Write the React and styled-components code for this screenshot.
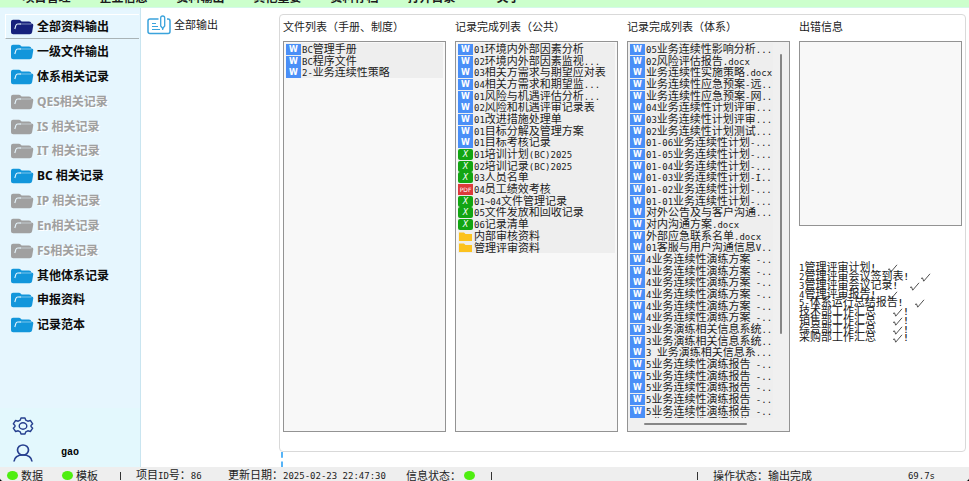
import styled, { createGlobalStyle, css } from "styled-components";
import { useState } from "react";

const GlobalStyle = createGlobalStyle`
  * {
    box-sizing: border-box;
  }
  body {
    margin: 0;
    background: #000;
  }
  button {
    border: 0;
    padding: 0;
    background: none;
    font: inherit;
    color: inherit;
    cursor: pointer;
  }
  ul {
    margin: 0;
    padding: 0;
    list-style: none;
  }
`;

const Page = styled.div`
  height: 100vh;
  display: flex;
  flex-direction: column;
  overflow: hidden;
  background: #fff;
  border-radius: 0 0 4px 4px;
  color: #1c1c1c;
  font-family: "Liberation Sans", "Noto Sans CJK SC", sans-serif;
  font-size: 11px;
  line-height: 12px;
`;

const MenuBar = styled.nav`
  height: 8px;
  flex: none;
  display: flex;
  align-items: flex-end;
  padding: 0 8px 2px;
  overflow: hidden;
  background: #ccffcc;
  border-bottom: 1px solid #d4f8ea;
`;
const MenuItem = styled.button`
  width: 77px;
  font-size: 12px;
  font-weight: 700;
  line-height: 14px;
`;

const Body = styled.div`
  flex: 1;
  min-height: 0;
  display: flex;
`;

// sidebar
const Sidebar = styled.aside`
  width: 141px;
  flex: none;
  display: flex;
  flex-direction: column;
  background: #e6f6fe;
  border-right: 1px solid #c9e5f0;
`;
const SideList = styled.ul`
  flex: 1;
  padding: 6px 1px 0 5px;
`;
const SideItem = styled.li`
  height: 25px;
  &:nth-child(6n) {
    height: 24px;
  }
`;
const SideButton = styled.button`
  width: 100%;
  height: 100%;
  display: flex;
  align-items: center;
  gap: 3px;
  padding-left: 5px;
  font-family: "Noto Sans", "Noto Sans CJK SC", sans-serif;
  font-size: 12px;
  font-weight: 700;
  line-height: 16px;
  white-space: nowrap;
  color: #0c0c0c;
  ${(props) =>
    props.$active &&
    css`
      border-top: 1px solid #fff;
      border-left: 1px solid #fff;
      border-bottom: 1px solid #a9b3b6;
      padding-left: 4px;
    `}
  &:disabled {
    color: #a0a0a0;
    text-shadow: 1px 1px 0 #fff;
    cursor: default;
  }
`;
const SideFooter = styled.div`
  display: flex;
  flex-direction: column;
  gap: 4px;
  padding: 8px 0 3px 12px;
  background: #e3f8fd;
  color: #27408f;
`;
const FooterRow = styled.div`
  height: 22px;
  display: flex;
  align-items: center;
  gap: 27px;
`;
const UserName = styled.span`
  color: #000;
  font-family: "Liberation Mono", monospace;
  font-size: 10px;
  font-weight: 700;
`;

// workspace
const Tree = styled.div`
  width: 138px;
  flex: none;
  padding: 7px 6px;
`;
const TreeItem = styled.button`
  display: flex;
  align-items: center;
  gap: 3px;
  white-space: nowrap;
`;
const Workspace = styled.main`
  flex: 1;
  min-width: 0;
  display: flex;
  flex-direction: column;
  padding: 6px 3px 0 0;
`;
const Group = styled.section`
  flex: 1;
  min-height: 0;
  display: grid;
  grid-template-columns: repeat(4, minmax(0, 1fr));
  gap: 9px;
  padding: 4px 3px 19px;
  border: 1px solid #d9d9d9;
  border-radius: 4px;
`;
const Splitter = styled.div`
  height: 15px;
  flex: none;
  margin-left: 2px;
  border-left: 2px dashed #57b4f7;
`;
const Column = styled.div`
  min-height: 0;
  display: flex;
  flex-direction: column;
`;
const Title = styled.h2`
  margin: 0 0 6px;
  font-size: 11px;
  font-weight: 400;
  line-height: 16px;
  white-space: nowrap;
`;
const Panel = styled.div`
  flex: 1;
  min-height: 0;
  padding: 1px 2px;
  border: 1px solid #939393;
  background: #f8f8f8;
`;
const ScrollPanel = styled(Panel)`
  display: grid;
  grid-template-columns: minmax(0, 1fr) 14px;
  grid-template-rows: minmax(0, 1fr) 12px;
  background: #f0f0f0;
`;
const ErrorPanel = styled(Panel)`
  flex: none;
  height: 185px;
`;
const FileList = styled.ul`
  min-height: 0;
  overflow: hidden;
  background: #eeeeee;
`;
const FileRow = styled.li`
  height: 12px;
  display: flex;
  align-items: center;
  gap: 1px;
  white-space: pre;
  overflow: hidden;
  &:nth-child(3n) {
    height: 11px;
  }
`;

// ascii glyphs, half as wide as a chinese one
const Half = styled.span`
  font-family: "DejaVu Sans Mono", monospace;
  font-size: 9px;
`;

const badgeColors = { w: "#4a8ff7", x: "#12a512", pdf: "#dc3b3b" };
const Badge = styled.span`
  width: 15px;
  height: 11px;
  flex: none;
  text-align: center;
  line-height: 11px;
  color: #fff;
  background: ${(props) => badgeColors[props.$kind]};
  border-radius: ${(props) => (props.$kind === "x" ? "2px" : "0")};
  font-family: "DejaVu Sans", sans-serif;
  font-size: ${(props) => (props.$kind === "pdf" ? "6px" : "8px")};
  font-weight: ${(props) => (props.$kind === "w" ? "700" : "400")};
  font-style: ${(props) => (props.$kind === "x" ? "italic" : "normal")};
`;
const FolderBadge = styled.svg`
  width: 15px;
  height: 11px;
  flex: none;
`;

const VerticalTrack = styled.div`
  display: flex;
  flex-direction: column;
  align-items: center;
  padding: 11px 0 0 1px;
`;
const VerticalThumb = styled.div`
  width: 2px;
  height: 77%;
  background: #868686;
  border-radius: 1px;
`;
const HorizontalTrack = styled.div`
  display: flex;
  align-items: center;
  padding-left: 14px;
`;
const HorizontalThumb = styled.div`
  width: 80%;
  height: 2px;
  background: #868686;
  border-radius: 1px;
`;

const Checks = styled.ul`
  margin-top: 37px;
`;
const CheckRow = styled.li`
  height: 9px;
  line-height: 9px;
  white-space: pre;
  &:nth-child(4n) {
    height: 8px;
  }
`;
const Tick = styled.svg`
  width: 11px;
  height: 9px;
  vertical-align: -2px;
`;
const Bang = styled(Half)`
  font-weight: 700;
`;

// status bar
const StatusBar = styled.footer`
  height: 14px;
  flex: none;
  display: grid;
  grid-template-columns: 55px 58px 16px 92px 178px 85px 1fr 16px 222px;
  align-items: center;
  padding: 2px 34px 0 7px;
  background: #eeeeee;
  white-space: pre;
`;
const Status = styled.span`
  display: flex;
  align-items: center;
  gap: 3px;
`;
const StatusEnd = styled(Status)`
  justify-content: space-between;
`;
const Dot = styled.span`
  width: 11px;
  height: 9px;
  border-radius: 50%;
  background: #4fee10;
`;
const Divider = styled.span`
  width: 1px;
  height: 8px;
  background: #333;
`;

const menus = ["项目管理", "企业信息", "资料输出", "其他重要", "资料存档", "打开目录", "关于"];

const sideItems = [
  { label: "全部资料输出" },
  { label: "一级文件输出" },
  { label: "体系相关记录" },
  { label: "QES相关记录", disabled: true },
  { label: "IS 相关记录", disabled: true },
  { label: "IT 相关记录", disabled: true },
  { label: "BC 相关记录" },
  { label: "IP 相关记录", disabled: true },
  { label: "En相关记录", disabled: true },
  { label: "FS相关记录", disabled: true },
  { label: "其他体系记录" },
  { label: "申报资料" },
  { label: "记录范本" },
];

const manuals = [
  ["w", "BC管理手册"],
  ["w", "BC程序文件"],
  ["w", "2-业务连续性策略"],
];

const commonRecords = [
  ["w", "01环境内外部因素分析"],
  ["w", "02环境内外部因素监视..."],
  ["w", "03相关方需求与期望应对表"],
  ["w", "04相关方需求和期望监..."],
  ["w", "01风险与机遇评估分析..."],
  ["w", "02风险和机遇评审记录表"],
  ["w", "01改进措施处理单"],
  ["w", "01目标分解及管理方案"],
  ["w", "01目标考核记录"],
  ["x", "01培训计划(BC)2025"],
  ["x", "02培训记录(BC)2025"],
  ["x", "03人员名单"],
  ["pdf", "04员工绩效考核"],
  ["x", "01~04文件管理记录"],
  ["x", "05文件发放和回收记录"],
  ["x", "06记录清单"],
  ["folder", "内部审核资料"],
  ["folder", "管理评审资料"],
];

const systemRecords = [
  "05业务连续性影响分析...",
  "02风险评估报告.docx",
  "业务连续性实施策略.docx",
  "业务连续性应急预案-远..",
  "业务连续性应急预案-网..",
  "04业务连续性计划评审...",
  "03业务连续性计划评审...",
  "02业务连续性计划测试...",
  "01-06业务连续性计划-...",
  "01-05业务连续性计划-...",
  "01-04业务连续性计划-...",
  "01-03业务连续性计划-I..",
  "01-02业务连续性计划-...",
  "01-01业务连续性计划-...",
  "对外公告及与客户沟通...",
  "对内沟通方案.docx",
  "外部应急联系名单.docx",
  "01客服与用户沟通信息V..",
  ...Array(6).fill("4业务连续性演练方案 -.."),
  "3业务演练相关信息系统..",
  "3业务演练相关信息系统..",
  "3 业务演练相关信息系...",
  ...Array(6).fill("5业务连续性演练报告 -.."),
].map((name) => ["w", name]);

const checks = [
  { text: "1管理评审计划" },
  { text: "2管理评审会议签到表" },
  { text: "3管理评审会议记录" },
  { text: "4管理评审报告" },
  { text: "5-体系运行总结报告" },
  { text: "技术部工作汇总", after: true },
  { text: "销售部工作汇总", after: true },
  { text: "综合部工作汇总", after: true },
  { text: "采购部工作汇总", after: true },
];

// puts the ascii runs of a text in the half-width face
const Mixed = ({ children }) => (
  <span>
    {children
      .split(/([\x20-\x7e]+)/)
      .filter(Boolean)
      .map((part, i) => (/^[\x20-\x7e]/.test(part) ? <Half key={i}>{part}</Half> : part))}
  </span>
);

const SideFolder = ({ color }) => (
  <svg width="24" height="16" viewBox="0 0 24 16" aria-hidden="true">
    <path
      d="M3 .8h6q1 0 1.600.7l1 1.100H19q2.200 0 2.400 2 2.200 0 1.900 1.700l-1.200 7q-.4 2-2.500 2H3.200q-2.200 0-2.200-2V2.800q0-2 2-2z"
      fill={color}
    />
    <path d="M9.500 5h12" fill="none" stroke="#e6f6fe" strokeWidth="0.700" strokeOpacity="0.700" />
    <path d="M4.800 10l1.100-3.600Q6.300 5 7.800 5H11" fill="none" stroke="#e6f6fe" strokeWidth="1.100" />
  </svg>
);

const TreeIcon = () => (
  <svg width="24" height="20" viewBox="0 0 24 20" fill="none" stroke="#3ba3dc" aria-hidden="true">
    <path d="M11.500 4H3Q1 4 1 6v10.500q0 2 2 2h18q2 0 2-2V6q0-2-1.800-2H20" strokeWidth="1.500" />
    <path d="M5 8.500h4M5 11.500h6M5 14.500h8" strokeWidth="1.200" />
    <path d="M13.700 3q0-2 2-2t2 2v8l-2 2.500-2-2.500z" strokeWidth="1.300" />
    <path d="M15.700 13v2" strokeWidth="1.200" />
  </svg>
);

const GearIcon = () => (
  <svg width="22" height="18" viewBox="0 0 22 18" fill="none" stroke="currentColor" strokeWidth="1.400" aria-hidden="true">
    <path
      d="M9 1h4l.8 2.200 2 1 2.600-.7 2.300 3.300-1.700 1.700v1l1.700 1.700-2.300 3.300-2.600-.7-2 1L13 17H9l-.8-2.200-2-1-2.600.7-2.300-3.300L3 9.500v-1L1.300 6.800l2.300-3.300 2.600.7 2-1z"
      strokeLinejoin="round"
    />
    <ellipse cx="11" cy="9" rx="3.800" ry="3.200" />
  </svg>
);

const UserIcon = () => (
  <svg width="22" height="18" viewBox="0 0 22 18" fill="none" stroke="currentColor" strokeWidth="1.700" aria-hidden="true">
    <ellipse cx="11" cy="6" rx="5.500" ry="5" />
    <path d="M2 17.500q.8-6.500 9-6.500t9 6.500" />
  </svg>
);

const FileIcon = ({ kind }) => {
  if (kind === "folder") {
    return (
      <FolderBadge viewBox="0 0 15 11" aria-hidden="true">
        <path d="M1 1.500h5l1.500 1.500H14v7H1z" fill="#fcc21f" />
      </FolderBadge>
    );
  }
  return <Badge $kind={kind}>{kind.toUpperCase()}</Badge>;
};

const Files = ({ files }) => (
  <FileList>
    {files.map(([kind, name], i) => (
      <FileRow key={i}>
        <FileIcon kind={kind} />
        <Mixed>{name}</Mixed>
      </FileRow>
    ))}
  </FileList>
);

const CheckMark = () => (
  <Tick viewBox="0 0 11 9" fill="none" stroke="#3c3c3c" strokeWidth="0.900" aria-label="完成">
    <path d="M1 5.500l1.500-.6 1.200 3.300L10 .8" />
  </Tick>
);

const App = () => {
  const [active, setActive] = useState(0);

  const folderColor = (item, i) => {
    if (item.disabled) return "#a0a0a0";
    return i === active ? "#16217c" : "#1296db";
  };

  return (
    <Page>
      <GlobalStyle />
      <MenuBar>
        {menus.map((menu) => (
          <MenuItem key={menu}>{menu}</MenuItem>
        ))}
      </MenuBar>
      <Body>
        <Sidebar>
          <SideList>
            {sideItems.map((item, i) => (
              <SideItem key={item.label}>
                <SideButton $active={i === active} disabled={item.disabled} onClick={() => setActive(i)}>
                  <SideFolder color={folderColor(item, i)} />
                  {item.label}
                </SideButton>
              </SideItem>
            ))}
          </SideList>
          <SideFooter>
            <FooterRow>
              <button aria-label="设置">
                <GearIcon />
              </button>
            </FooterRow>
            <FooterRow>
              <UserIcon />
              <UserName>gao</UserName>
            </FooterRow>
          </SideFooter>
        </Sidebar>
        <Tree>
          <TreeItem>
            <TreeIcon />
            全部输出
          </TreeItem>
        </Tree>
        <Workspace>
          <Group>
            <Column>
              <Title>文件列表（手册、制度）</Title>
              <Panel>
                <Files files={manuals} />
              </Panel>
            </Column>
            <Column>
              <Title>记录完成列表（公共）</Title>
              <Panel>
                <Files files={commonRecords} />
              </Panel>
            </Column>
            <Column>
              <Title>记录完成列表（体系）</Title>
              <ScrollPanel>
                <Files files={systemRecords} />
                <VerticalTrack>
                  <VerticalThumb />
                </VerticalTrack>
                <HorizontalTrack>
                  <HorizontalThumb />
                </HorizontalTrack>
              </ScrollPanel>
            </Column>
            <Column>
              <Title>出错信息</Title>
              <ErrorPanel />
              <Checks>
                {checks.map(({ text, after }) => (
                  <CheckRow key={text}>
                    <Mixed>{text}</Mixed>
                    {after ? <Half>{"   "}</Half> : <Bang>{"!  "}</Bang>}
                    <CheckMark />
                    {after && <Bang>!</Bang>}
                  </CheckRow>
                ))}
              </Checks>
            </Column>
          </Group>
          <Splitter />
        </Workspace>
      </Body>
      <StatusBar>
        <Status>
          <Dot />
          数据
        </Status>
        <Status>
          <Dot />
          模板
        </Status>
        <Divider />
        <Mixed>项目ID号：86</Mixed>
        <Mixed>更新日期：2025-02-23 22:47:30</Mixed>
        <Status>
          信息状态：
          <Dot />
        </Status>
        <Divider />
        <Divider />
        <StatusEnd>
          <span>操作状态：输出完成</span>
          <Half>69.7s</Half>
        </StatusEnd>
      </StatusBar>
    </Page>
  );
};

export default App;
